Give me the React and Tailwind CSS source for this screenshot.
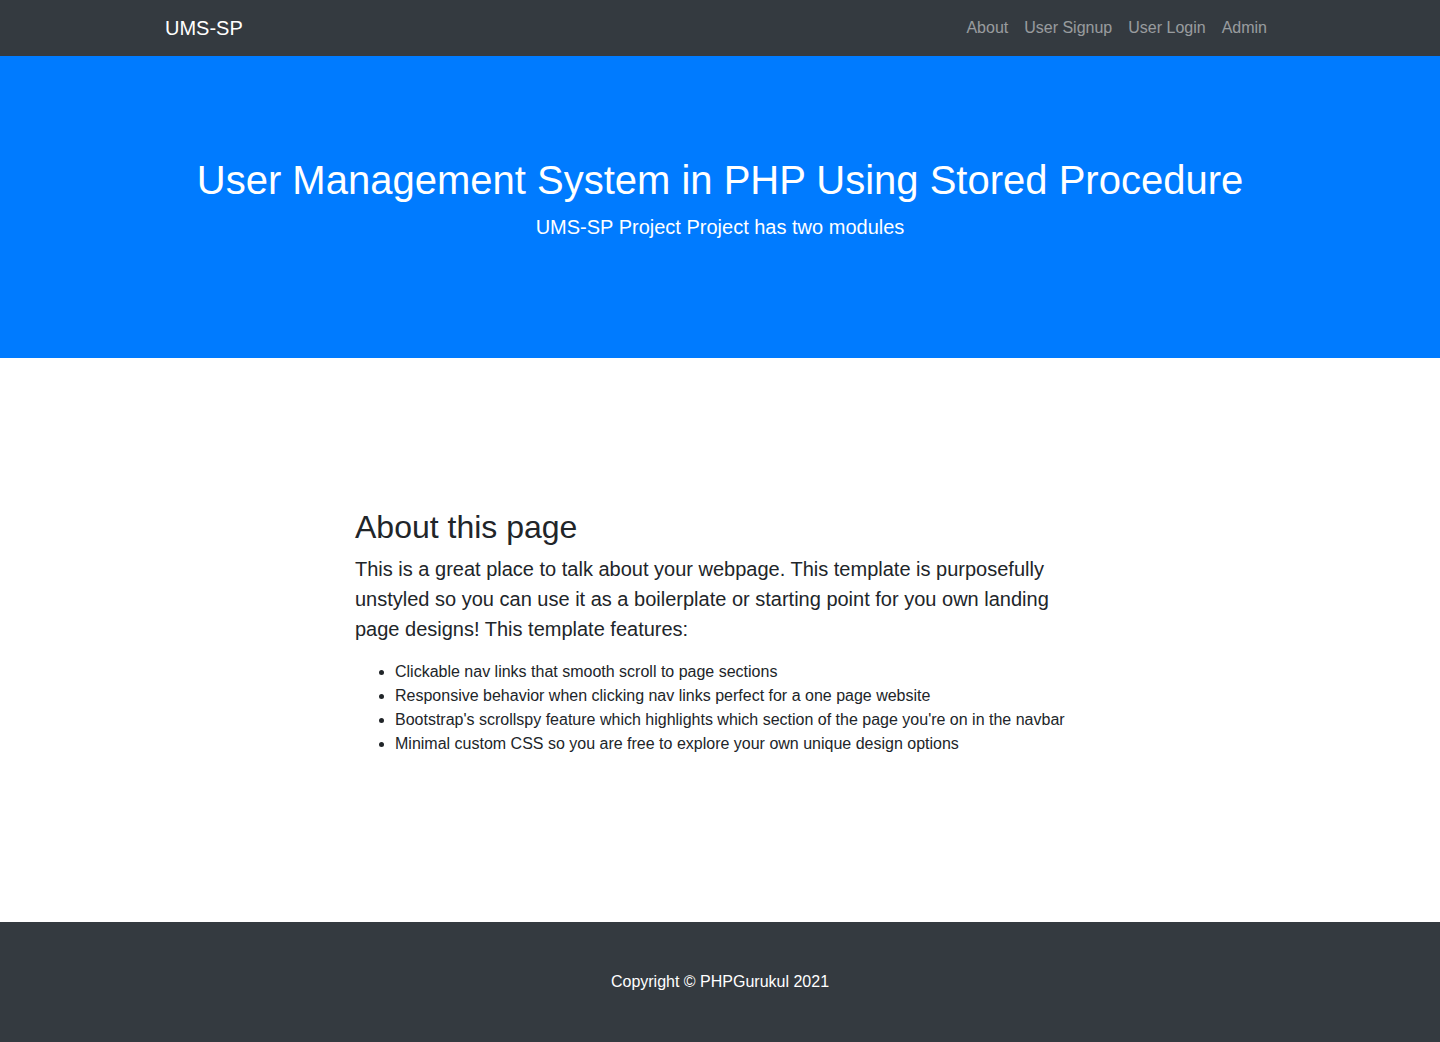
export default function App() {
  const font = { fontFamily: '"Liberation Sans", Arial, sans-serif' };
  return (
    <div style={font} className="text-[#212529] text-base leading-normal">
      <nav className="bg-[#343a40] h-[56px]">
        <div className="w-[1140px] mx-auto px-[15px] h-full flex items-center justify-between">
          <a className="text-white text-[20px] leading-[30px] py-[5px]">UMS-SP</a>
          <ul className="flex m-0 p-0 list-none">
            {["About", "User Signup", "User Login", "Admin"].map((t) => (
              <li key={t}>
                <a className="block px-2 py-2 text-white/50 text-base leading-6">{t}</a>
              </li>
            ))}
          </ul>
        </div>
      </nav>
      <header className="bg-[#007bff] text-white text-center pt-[100px] pb-[100px]">
        <div className="w-[1140px] mx-auto px-[15px]">
          <h1 className="text-[40px] leading-[1.2] font-medium mb-2 m-0">
            User Management System in PHP Using Stored Procedure
          </h1>
          <p className="text-[20px] leading-[30px] font-light mb-4 m-0">
            UMS-SP Project Project has two modules
          </p>
        </div>
      </header>
      <section className="py-[150px]">
        <div className="w-[730px] mx-auto">
          <h2 className="text-[32px] leading-[1.2] font-medium mb-2">About this page</h2>
          <p className="text-[20px] leading-[30px] font-light mb-4">
            This is a great place to talk about your webpage. This template is purposefully unstyled so you can use it as a boilerplate or starting point for you own landing page designs! This template features:
          </p>
          <ul className="list-disc pl-10 mb-4 text-base leading-6">
            <li>Clickable nav links that smooth scroll to page sections</li>
            <li>Responsive behavior when clicking nav links perfect for a one page website</li>
            <li>Bootstrap's scrollspy feature which highlights which section of the page you're on in the navbar</li>
            <li>Minimal custom CSS so you are free to explore your own unique design options</li>
          </ul>
        </div>
      </section>
      <footer className="bg-[#343a40] py-12">
        <p className="m-0 text-center text-white text-base leading-6">Copyright © PHPGurukul 2021</p>
      </footer>
    </div>
  );
}
